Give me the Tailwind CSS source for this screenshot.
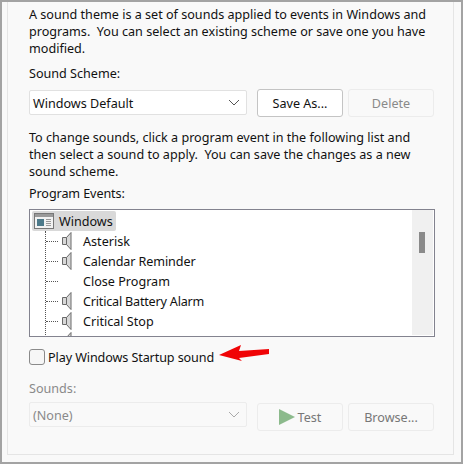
<!DOCTYPE html>
<html lang="en">
<head>
    <meta charset="UTF-8">
    <title>Sound</title>
    <script src="https://cdn.jsdelivr.net/npm/@tailwindcss/browser@4"></script>
</head>
<body class="w-[463px] h-[464px] overflow-hidden bg-[#f9f9f9] font-['Noto_Sans',sans-serif] text-[12.6px] text-[#111]">
    <div class="w-[463px] h-[464px] border-[2px] border-[#a3a3a3]">
        <!-- inner panel -->
        <div class="relative w-[447px] h-[453px] ml-[5px] border-r border-b border-l border-[#e5e5e5] pl-[21px] pt-[4px]">
            <p class="leading-[17px] w-[410px]">A sound theme is a set of sounds applied to events in Windows and programs.&nbsp; You can select an existing scheme or save one you have modified.</p>

            <p class="leading-[17px] mt-[8px]">Sound Scheme:</p>
            <div class="flex mt-[7px] h-[28px]">
                <div class="w-[218px] h-[25px] mt-[1px] flex items-center justify-between bg-white border border-[#e1e1e1] rounded-[2px] pl-[3px] pr-[6px]">
                    <span class="pt-[3px]">Windows Default</span>
                    <svg width="12" height="7" viewBox="0 0 12 7" fill="none" stroke="#555"><path d="M1 1l5 5 5-5"/></svg>
                </div>
                <div class="w-[86px] h-[28px] ml-[10px] pt-[2px] flex items-center justify-center bg-white border border-[#c4c4c4] rounded-[3px]">Save As...</div>
                <div class="w-[86px] h-[28px] ml-[5px] pt-[2px] flex items-center justify-center border border-[#ececec] rounded-[3px] text-[#8a8a8a]">Delete</div>
            </div>

            <p class="leading-[17px] w-[390px] mt-[12px]">To change sounds, click a program event in the following list and then select a sound to apply.&nbsp; You can save the changes as a new sound scheme.</p>

            <p class="leading-[17px] mt-[5px] tracking-[-0.1px]">Program Events:</p>
            <div class="relative flex w-[406px] h-[128px] mt-[7px] bg-white border border-[#83838f] overflow-hidden">
                <div class="flex-1 pt-[1px] pl-[2px]">
                    <div class="flex items-center h-[20px]">
                        <div class="flex items-center h-[20px] bg-[#d9d9d9] rounded-[2px] pl-[2px] pr-[3px] gap-[5px]">
                            <svg width="20" height="16" viewBox="0 0 20 16"><rect x="0.5" y="0.5" width="19" height="15" fill="#f2f2f2" stroke="#777"/><rect x="1" y="1" width="18" height="3" fill="#9a9a9a"/><rect x="3" y="6" width="7" height="7" fill="#4d7a8a"/><path d="M12 6.5h5M12 8.5h5M12 10.5h5M12 12.5h5" stroke="#999"/></svg>
                            <span class="pt-[2px]">Windows</span>
                        </div>
                    </div>
                    <div class="relative ml-[13px] border-l border-dotted border-[#555] h-[120px]">
                        <div class="flex items-center h-[20px]"><span class="w-[12px] border-t border-dotted border-[#555]"></span><svg class="ml-[4px] shrink-0" width="10" height="18" viewBox="0 0 10 18" fill="#d8d8d8" stroke="#6a6a6a"><path d="M0.5 5.5h4l4.5-5v17l-4.5-5h-4z"/><path d="M4.5 5.5v7"/></svg><span class="ml-[11px] pt-[2px]">Asterisk</span></div>
                        <div class="flex items-center h-[20px]"><span class="w-[12px] border-t border-dotted border-[#555]"></span><svg class="ml-[4px] shrink-0" width="10" height="18" viewBox="0 0 10 18" fill="#d8d8d8" stroke="#6a6a6a"><path d="M0.5 5.5h4l4.5-5v17l-4.5-5h-4z"/><path d="M4.5 5.5v7"/></svg><span class="ml-[11px] pt-[2px] tracking-[-0.1px]">Calendar Reminder</span></div>
                        <div class="flex items-center h-[20px]"><span class="w-[12px] border-t border-dotted border-[#555]"></span><span class="ml-[25px] pt-[2px]">Close Program</span></div>
                        <div class="flex items-center h-[20px]"><span class="w-[12px] border-t border-dotted border-[#555]"></span><svg class="ml-[4px] shrink-0" width="10" height="18" viewBox="0 0 10 18" fill="#d8d8d8" stroke="#6a6a6a"><path d="M0.5 5.5h4l4.5-5v17l-4.5-5h-4z"/><path d="M4.5 5.5v7"/></svg><span class="ml-[11px] pt-[2px] tracking-[-0.2px]">Critical Battery Alarm</span></div>
                        <div class="flex items-center h-[20px]"><span class="w-[12px] border-t border-dotted border-[#555]"></span><svg class="ml-[4px] shrink-0" width="10" height="18" viewBox="0 0 10 18" fill="#d8d8d8" stroke="#6a6a6a"><path d="M0.5 5.5h4l4.5-5v17l-4.5-5h-4z"/><path d="M4.5 5.5v7"/></svg><span class="ml-[11px] pt-[2px]">Critical Stop</span></div>
                        <div class="flex items-center h-[20px]"><span class="w-[12px]"></span><svg class="ml-[4px] shrink-0" width="10" height="18" viewBox="0 0 10 18" fill="#d8d8d8" stroke="#6a6a6a"><path d="M0.5 5.5h4l4.5-5v17l-4.5-5h-4z"/><path d="M4.5 5.5v7"/></svg></div>
                    </div>
                </div>
                <!-- scrollbar -->
                <div class="w-[21px] h-[125px] mr-[1px] bg-[#f0f0f0] pt-[22px] pl-[7px]">
                    <div class="w-[6px] h-[21px] bg-[#8a8a8a]"></div>
                </div>
            </div>

            <div class="flex items-center mt-[11px] h-[18px]">
                <span class="w-[16px] h-[16px] bg-[#f6f6f6] border border-[#8a8a8a] rounded-[3px]"></span>
                <span class="ml-[3px] pt-[2px] tracking-[-0.1px]">Play Windows Startup sound</span>
            </div>
            <!-- red arrow -->
            <svg class="absolute left-[211px] top-[343px]" width="50" height="16" viewBox="0 0 50 16"><path d="M0 10L22 0l-2 6 30-2v5l-30 4 3 3z" fill="#f00406"/></svg>

            <p class="leading-[17px] mt-[14px] text-[#8a8a8a]">Sounds:</p>
            <div class="flex mt-[5px] h-[29px]">
                <div class="w-[218px] h-[25px] flex items-center justify-between border border-[#ececec] rounded-[2px] pl-[3px] pr-[6px] text-[#8a8a8a]">
                    <span class="pt-[3px]">(None)</span>
                    <svg width="12" height="7" viewBox="0 0 12 7" fill="none" stroke="#aaa"><path d="M1 1l5 5 5-5"/></svg>
                </div>
                <div class="w-[86px] h-[28px] mt-[1px] ml-[10px] flex items-center justify-center gap-[3px] border border-[#ececec] rounded-[3px] text-[#777]">
                    <svg width="16" height="16" viewBox="0 0 16 16"><path d="M0 0l16 8-16 8z" fill="#8cba8c"/></svg>
                    <span class="pt-[2px]">Test</span>
                </div>
                <div class="w-[86px] h-[28px] mt-[1px] ml-[5px] pt-[2px] flex items-center justify-center border border-[#ececec] rounded-[3px] text-[#777]">Browse...</div>
            </div>
        </div>
    </div>
</body>
</html>
